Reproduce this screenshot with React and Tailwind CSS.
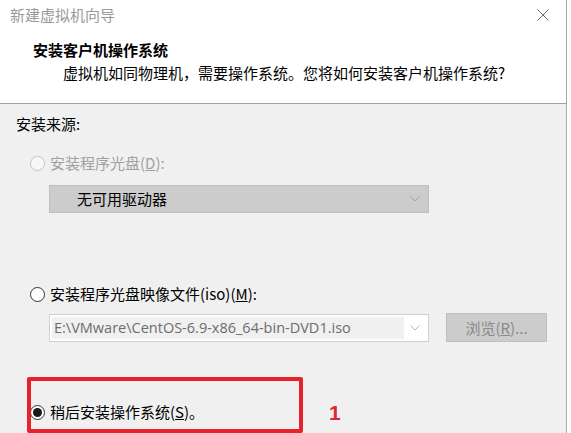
const font = { fontFamily: '"Noto Sans CJK SC", "Open Sans", sans-serif' };

const Radio = ({ state }) => {
  if (state === "disabled") {
    return <span className="inline-block w-[15px] h-[15px] rounded-full border border-[#c4c4c4] bg-[#f7f7f7]" />;
  }
  return (
    <span className="inline-flex items-center justify-center w-[15px] h-[15px] rounded-full border border-[#333333] bg-white">
      {state === "checked" && <span className="w-[9px] h-[9px] rounded-full bg-[#1a1a1a]" />}
    </span>
  );
};

const Chevron = ({ color }) => (
  <svg width="10" height="6" viewBox="0 0 10 6" className="shrink-0">
    <path d="M0.5 0.5 L5 5 L9.5 0.5" fill="none" stroke={color} strokeWidth="1" />
  </svg>
);

export default function App() {
  return (
    <div className="w-[571px] h-[433px] overflow-hidden bg-white flex" style={font}>
      <div className="w-[567px] h-full border-r border-[#a8a8a8] flex flex-col relative">
        <div className="bg-white border-b border-[#a0a0a0] h-[104px] flex flex-col">
          <div className="flex items-center justify-between pt-[5px] pl-[10px] pr-[17px]">
            <span className="text-[15px] leading-5 text-[#9a9a9a]">新建虚拟机向导</span>
            <svg width="12" height="12" viewBox="0 0 12 12">
              <path d="M0.5 0.5 L11.5 11.5 M11.5 0.5 L0.5 11.5" stroke="#6f6f6f" strokeWidth="1" />
            </svg>
          </div>
          <div className="mt-[15px] pl-[33px] text-[15px] leading-5 font-bold text-black">安装客户机操作系统</div>
          <div className="mt-[3px] pl-[63px] text-[15px] leading-5 text-black">虚拟机如同物理机，需要操作系统。您将如何安装客户机操作系统?</div>
        </div>

        <div className="flex-1 bg-[#f0f0f0] pl-[16px] text-[15px]">
          <div className="pt-[10px] leading-5 text-black">安装来源:</div>

          <div className="mt-[19px] ml-[14px] flex items-center gap-[5px] leading-5 text-[#a0a0a0]">
            <Radio state="disabled" />
            <span>安装程序光盘(<span className="underline">D</span>):</span>
          </div>
          <div className="mt-[12px] ml-[33px] w-[380px] h-[28px] bg-[#cccccc] border border-[#bfbfbf] flex items-center justify-between pl-[27px] pr-[8px]">
            <span className="leading-5 text-black">无可用驱动器</span>
            <Chevron color="#a5a5a5" />
          </div>

          <div className="mt-[71px] ml-[14px] flex items-center gap-[5px] leading-5 text-black">
            <Radio state="empty" />
            <span>安装程序光盘映像文件(iso)(<span className="underline">M</span>):</span>
          </div>
          <div className="mt-[9px] flex items-center">
            <div className="ml-[33px] w-[380px] h-[28px] bg-white border border-[#d0d0d0] flex items-center p-[2px]">
              <div className="flex-1 h-full bg-[#f0f0f0] flex items-center pl-[2px] text-[14.5px] text-[#6d6d6d]" style={{ fontFamily: '"Open Sans", sans-serif' }}>
                E:\VMware\CentOS-6.9-x86_64-bin-DVD1.iso
              </div>
              <div className="w-[22px] flex justify-center">
                <Chevron color="#b5b5b5" />
              </div>
            </div>
            <button className="ml-[17px] w-[101px] h-[29px] bg-[#cccccc] border border-[#bfbfbf] text-[#8a8a8a] leading-5">
              浏览(<span className="underline">R</span>)...
            </button>
          </div>

          <div className="mt-[60px] ml-[14px] flex items-center gap-[5px] leading-5 text-black">
            <Radio state="checked" />
            <span>稍后安装操作系统(<span className="underline">S</span>)。</span>
          </div>
        </div>

        <div className="absolute left-[27px] top-[377px] w-[276px] h-[56px] border-4 border-[#e8222b] rounded-[2px]" />
        <div className="absolute left-[329px] top-[401px] text-[21px] font-bold text-[#e02630] leading-6" style={{ fontFamily: '"Liberation Sans", sans-serif' }}>1</div>
      </div>
    </div>
  );
}
